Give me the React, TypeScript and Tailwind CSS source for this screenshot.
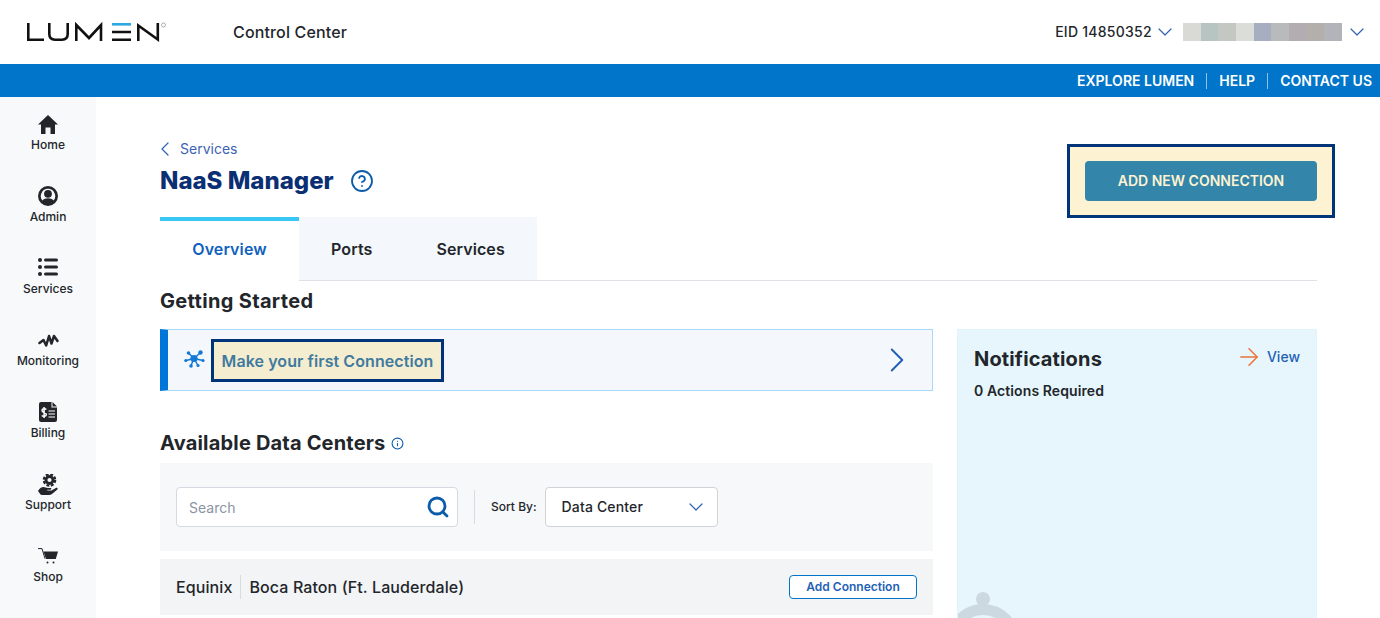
import { ChevronDown, ChevronLeft, ChevronRight, ArrowRight, Search, CircleHelp, Info } from "lucide-react";
import type { ReactNode } from "react";

const BLUR_COLORS = ["#d9d9d6", "#b8c4c1", "#c3c9c2", "#dbded8", "#a8aec2", "#b9babc", "#b3adb1", "#b3b0ab", "#b3b3ba"];

function LumenLogo() {
  return (
    <svg width="142" height="22" viewBox="0 0 142 22" fill="none" strokeWidth="2.6" stroke="#111">
      <path d="M2.300 2v16.700H18" />
      <path d="M23.300 2v11c0 4 2.500 5.700 5.700 5.700h7c3 0 5.700-1.700 5.700-5.700V2" />
      <path d="M50.300 20V4l12.700 13L75 4v16" />
      <path d="M86 3.300h19" stroke="#2aa9e0" />
      <path d="M86 11h19M86 18.700h19" />
      <path d="M112.300 20V4.500l19.500 14V2" />
      <circle cx="137.500" cy="4" r="2" stroke="#999" strokeWidth="0.800" />
    </svg>
  );
}

function HomeIcon() {
  return (
    <svg width="20" height="19" viewBox="0 0 20 19" fill="#22262b">
      <path d="M10 0 20 9.500h-3V19h-4.500v-6.500h-5V19H3V9.500H0Z" />
    </svg>
  );
}

function AdminIcon() {
  return (
    <svg width="20" height="20" viewBox="0 0 20 20" fill="#22262b">
      <path fillRule="evenodd" d="M10 0a10 10 0 1 1 0 20a10 10 0 0 1 0-20Zm0 2.800a7.200 7.200 0 0 0-5.600 11.700c1.300-1.400 3.300-2.200 5.600-2.200s4.300.800 5.600 2.200a7.200 7.200 0 0 0-5.600-11.700Z" />
      <circle cx="10" cy="7.800" r="3.900" />
    </svg>
  );
}

function ListIcon() {
  return (
    <svg width="20" height="20" viewBox="0 0 20 20" fill="#22262b">
      <circle cx="2" cy="2" r="2" />
      <circle cx="2" cy="9" r="2" />
      <circle cx="2" cy="16" r="2" />
      <rect x="6" y="0.500" width="14" height="3" rx="1.500" />
      <rect x="6" y="7.500" width="14" height="3" rx="1.500" />
      <rect x="6" y="14.500" width="14" height="3" rx="1.500" />
    </svg>
  );
}

function MonitorIcon() {
  return (
    <svg width="21" height="15" viewBox="0 0 21 15" fill="none" stroke="#22262b" strokeWidth="2.500" strokeLinejoin="round" strokeLinecap="round">
      <path d="M1.500 10 5.500 7l2.700 5.500L11 3l2.500 7.500L16 3l3.500 5" />
    </svg>
  );
}

function BillingIcon() {
  return (
    <svg width="18" height="20" viewBox="0 0 18 20">
      <path d="M2 0h10.500v5.500H18V18a2 2 0 0 1-2 2H2a2 2 0 0 1-2-2V2a2 2 0 0 1 2-2Z" fill="#22262b" />
      <path d="M13.500 0 18 4.500h-4.500Z" fill="#22262b" />
      <path d="M7.300 7.500c-1-1.200-4.300-1.200-4.300 1 0 2.500 4.300 1.500 4.300 4 0 2.200-3.400 2.200-4.500 1M5.100 5v11" fill="none" stroke="#fff" strokeWidth="1.500" />
      <path d="M9.500 9H16M9.500 12H16M9.500 15H16" stroke="#fff" strokeWidth="1.200" />
    </svg>
  );
}

function SupportIcon() {
  return (
    <svg width="20" height="21" viewBox="0 0 20 21" fill="#22262b">
      <circle cx="11.500" cy="6" r="5.700" fill="none" stroke="#22262b" strokeWidth="2.200" strokeDasharray="2.900 1.580" />
      <circle cx="11.500" cy="6" r="3.500" fill="none" stroke="#22262b" strokeWidth="2.800" />
      <path d="M0 17c1.500-2.500 3.300-4 5.500-4 1.500 0 2.500 1 4.500 1h2.500c1.200 0 1.200 1.700 0 1.700H9.500c-.5 0-.5.700 0 .700h4l4.300-2.500c1.500-.7 2.500.7 1.300 1.800L14 20c-1 .7-2 1-3 1H4l-1.500-.5Z" />
    </svg>
  );
}

function CartIcon() {
  return (
    <svg width="20" height="16" viewBox="0 0 20 16" fill="#22262b">
      <path d="M0 .6h4l3 10" fill="none" stroke="#22262b" strokeWidth="1" />
      <path d="M5.500 3.500H20l-2.200 7.500H8Z" />
      <circle cx="9.500" cy="14.500" r="1" />
      <circle cx="15.500" cy="14.500" r="1" />
    </svg>
  );
}

function NodesIcon() {
  return (
    <svg width="22" height="20" viewBox="0 0 22 20" fill="#1479d6" stroke="#1479d6">
      <path d="M10 8.500 4.500 3M10 8.500l6.500-6M10 8.500 2 10.500M10 8.500l9 2M10 8.500l-3 7M10 8.500l4 7" strokeWidth="1.500" />
      <circle cx="10" cy="8.500" r="3.600" stroke="none" />
      <circle cx="4.500" cy="3" r="1.800" stroke="none" />
      <circle cx="16.500" cy="2.500" r="2.200" stroke="none" />
      <circle cx="1.800" cy="10.500" r="1.600" stroke="none" />
      <circle cx="19" cy="10.500" r="1.600" stroke="none" />
      <circle cx="7" cy="16" r="1.800" stroke="none" />
      <circle cx="14" cy="15.500" r="1.600" stroke="none" />
    </svg>
  );
}

const NAV: { label: string; icon: ReactNode }[] = [
  { label: "Home", icon: <HomeIcon /> },
  { label: "Admin", icon: <AdminIcon /> },
  { label: "Services", icon: <ListIcon /> },
  { label: "Monitoring", icon: <MonitorIcon /> },
  { label: "Billing", icon: <BillingIcon /> },
  { label: "Support", icon: <SupportIcon /> },
  { label: "Shop", icon: <CartIcon /> },
];

export default function App() {
  return (
    <div className="h-[618px] w-[1380px] overflow-hidden bg-white font-['Inter',sans-serif] text-[#22262b]">
      {/* Top header */}
      <header className="flex h-16 items-center">
        <div className="ml-[26px] w-[207px]"><LumenLogo /></div>
        <span className="text-base font-medium tracking-[0.15px]">Control Center</span>
        <div className="ml-auto flex items-center pr-[11px]">
          <span className="text-sm font-medium tracking-[0.25px]">EID 14850352</span>
          <ChevronDown size={24} strokeWidth={1.200} className="ml-px text-[#2f62b5]" />
          <div className="ml-[6px] flex h-[18px]">
            {BLUR_COLORS.map(c => <div key={c} className="h-full w-[17.700px]" style={{ backgroundColor: c }} />)}
          </div>
          <ChevronDown size={24} strokeWidth={1.200} className="ml-[3px] text-[#2f62b5]" />
        </div>
      </header>

      <div className="flex h-[33px] items-center justify-end bg-[#0075c9] pr-2 text-sm font-semibold text-white">
        <span>EXPLORE LUMEN</span>
        <span className="mx-3 h-4 w-px bg-[#8fc3e8]" />
        <span>HELP</span>
        <span className="mx-3 h-4 w-px bg-[#8fc3e8]" />
        <span>CONTACT US</span>
      </div>

      <div className="flex">
        {/* Sidebar */}
        <nav className="h-[521px] w-24 shrink-0 bg-[#f7f9fa] pt-[13px]">
          {NAV.map(n => (
            <div key={n.label} className="flex h-[72px] flex-col items-center">
              <div className="flex h-[28px] items-center justify-center">{n.icon}</div>
              <span className="text-xs leading-[14px] font-medium">{n.label}</span>
            </div>
          ))}
        </nav>

        {/* Main */}
        <main className="w-[1284px] pt-10 pl-16 pr-[63px]">
          <div className="flex h-20 justify-between">
            <div>
              <div className="flex h-6 items-center text-sm text-[#3d63b4]">
                <ChevronLeft size={24} strokeWidth={1.200} className="-ml-[7px] text-[#2f62b5]" />
                <span className="ml-[3px]">Services</span>
              </div>
              <div className="flex h-10 items-center">
                <h1 className="text-2xl font-extrabold text-[#0b2f73]">NaaS Manager</h1>
                <CircleHelp size={24} strokeWidth={1.800} className="ml-4 text-[#0b5cab]" />
              </div>
            </div>
            <div className="-mr-[18px] mt-[7px] flex h-[74px] w-[268px] items-center justify-center border-[3px] border-[#003478] bg-[#fdf3d3]">
              <button className="h-10 w-[232px] rounded-[4px] bg-[#3385a9] text-sm font-semibold text-[#fdf3d3]">ADD NEW CONNECTION</button>
            </div>
          </div>

          {/* Tabs */}
          <div className="flex h-16 border-b border-[#dfe1e6] text-base font-semibold tracking-[0.1px]">
            <div className="-mb-px flex h-16 w-[139px] items-center justify-center border-t-[4px] border-[#38c6f4] bg-white pb-1 text-[#0f62bd]">Overview</div>
            <div className="flex w-[238px] items-center bg-[#f4f7fb]">
              <span className="ml-8">Ports</span>
              <span className="ml-16">Services</span>
            </div>
          </div>

          <h2 className="flex h-10 items-center text-xl font-bold tracking-[0.33px]">Getting Started</h2>

          <div className="mt-2 flex gap-6">
            <div className="w-[773px] shrink-0">
              {/* Banner */}
              <div className="flex h-[62px] items-center border border-l-[8px] border-[#a9d8f8] border-l-[#0075d9] bg-[#f4f8fd]">
                <div className="ml-[16px] w-[22px]"><NodesIcon /></div>
                <div className="ml-[5px] flex h-[43px] w-[233px] items-center justify-center border-[3px] border-[#003478] bg-[#f5edd0] pt-px text-base font-semibold tracking-[0.08px] text-[#3f7a9f]">Make your first Connection</div>
                <ChevronRight size={42} strokeWidth={1.100} className="ml-auto mr-[14px] text-[#1f5fb5]" />
              </div>

              <div className="mt-8 flex h-10 items-center">
                <h2 className="text-xl font-bold tracking-[0.18px]">Available Data Centers</h2>
                <Info size={13} className="ml-[6px] text-[#0b5cab]" />
              </div>

              {/* Filters */}
              <div className="flex h-[88px] items-center bg-[#f7f8f9] px-4">
                <div className="flex h-10 w-[282px] items-center justify-between rounded-[4px] border border-[#d5d9e2] bg-white pl-3 pr-[7px]">
                  <span className="pt-px text-sm text-[#8b95a1]">Search</span>
                  <Search size={24} strokeWidth={2.800} className="text-[#0b5cab]" />
                </div>
                <div className="mx-4 h-[34px] w-px bg-[#d9dcdf]" />
                <span className="text-xs font-medium">Sort By:</span>
                <div className="ml-2 flex h-10 w-[173px] items-center justify-between rounded-[4px] border border-[#cfd2d6] bg-white pl-4 pr-[9px]">
                  <span className="text-sm font-medium tracking-[0.15px]">Data Center</span>
                  <ChevronDown size={24} strokeWidth={1.200} className="text-[#2f62b5]" />
                </div>
              </div>

              <div className="mt-2 flex h-14 items-center bg-[#f3f4f6] px-4">
                <span className="text-base font-medium tracking-[0.1px]">Equinix</span>
                <span className="mx-2 h-6 w-px bg-[#d9dcdf]" />
                <span className="text-base font-medium tracking-[0.1px]">Boca Raton (Ft. Lauderdale)</span>
                <button className="ml-auto h-6 w-32 rounded-[4px] border border-[#0075c9] bg-white text-xs font-semibold text-[#1f62b5]">Add Connection</button>
              </div>
            </div>

            {/* Notifications */}
            <aside className="relative h-[320px] w-[360px] overflow-hidden border border-[#dff4fc] bg-[#e7f6fc] px-4 pt-[15px]">
              <div className="flex items-start justify-between">
                <h2 className="text-xl leading-7 font-bold tracking-[0.15px]">Notifications</h2>
                <div className="-mt-[2px] flex items-center text-sm font-medium text-[#1f62b5]">
                  <ArrowRight size={28} strokeWidth={1.300} className="text-[#e8743b]" />
                  <span className="ml-1">View</span>
                </div>
              </div>
              <p className="mt-[8px] text-sm font-semibold tracking-[0.1px]">0 Actions Required</p>
              <div className="absolute left-[18px] top-[262px] h-[14px] w-[14px] rounded-full bg-[#ccd9e0]" />
              <div className="absolute -left-[12px] top-[274px] h-[74px] w-[74px] rounded-full border-[11px] border-[#ccd9e0]" />
            </aside>
          </div>
        </main>
      </div>
    </div>
  );
}
